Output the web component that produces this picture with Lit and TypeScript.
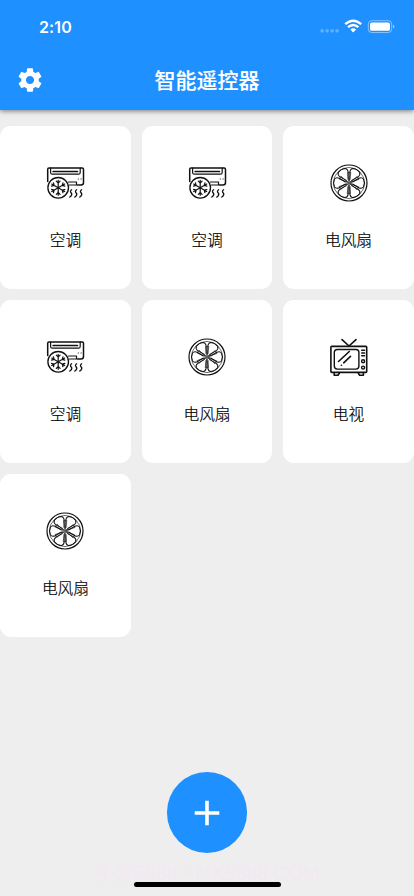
import { LitElement, html, svg, css } from "lit";
import { customElement } from "lit/decorators.js";

type Kind = "ac" | "fan" | "tv";

const names: Record<Kind, string> = { ac: "空调", fan: "电风扇", tv: "电视" };
const devices: Kind[] = ["ac", "ac", "fan", "ac", "fan", "tv", "fan"];

const arms = [0, 60, 120, 180, 240, 300];

const drawings = {
  ac: svg`
    <g fill="none" stroke="#111" stroke-width="1.5" stroke-linecap="round" stroke-linejoin="round">
      <path d="M2.7 18.5V6.2Q2.7 4.9 4 4.9H37.2Q38.5 4.9 38.5 6.2V19.5Q38.5 22 36 22H32.5"/>
      <path d="M5.6 5V9.4Q5.6 11.2 7.4 11.2H33.4Q35.2 11.2 35.2 9.4V5" stroke-width="1.2"/>
      <path d="M8.2 8.5H32.4" stroke-width="1.7"/>
      <path d="M23.5 19H31.5V22H24.5" stroke-width="1.2"/>
      <path d="M33.2 16h.2M36 16h.2" stroke-width="1"/>
      <circle cx="13.2" cy="24.8" r="10.3" fill="#fff" stroke-width="1.3"/>
      ${arms.map(a => svg`<path transform="rotate(${a} 13.2 24.8)" d="M13.2 24.8V17.3M11.3 18.2L13.2 20.1L15.1 18.2" stroke-width="1.2"/>`)}
      <path d="M26.6 26.8q-2 1.5-.5 3t-.3 3.5l-1 .8M31.6 26.8q-2 1.5-.5 3t-.3 3.5l-1 .8M36.6 26.8q-2 1.5-.5 3t-.3 3.5l-1 .8" stroke-width="1.3"/>
    </g>`,
  fan: svg`
    <g fill="none" stroke="#111" stroke-width="1.05" stroke-linejoin="round" stroke-linecap="round">
      <circle cx="20" cy="20" r="18" stroke-width="1.2"/>
      <circle cx="20" cy="20" r="15.6" stroke-width=".6"/>
      ${arms.map(a => svg`<path transform="rotate(${a + 30} 20 20)" d="M19 16.4L15.3 10.2Q13.9 7 16.2 5.4Q20 3.7 23.8 5.4Q26.1 7 24.7 10.2L21 16.4"/>`)}
      ${arms.map(a => svg`<path transform="rotate(${a} 20 20)" d="M20 17.5L18.5 9.6H21.5Z" stroke-width=".6"/>`)}
      <circle cx="20" cy="20" r="2.1" stroke-width=".9"/>
      <circle cx="20" cy="20" r=".9" fill="#111" stroke="none"/>
    </g>`,
  tv: svg`
    <g fill="none" stroke="#111" stroke-width="1.6" stroke-linecap="round" stroke-linejoin="round">
      <path d="M13 2.6L20 9L27 2.6"/>
      <rect x="1.9" y="9.4" width="35.8" height="26" rx=".8"/>
      <rect x="5.3" y="12.5" width="24.6" height="19.6" rx="3" stroke-width="1.4"/>
      <path d="M9.5 24.5L20.3 14.5M14.7 25.8L21.5 19.4M12.4 28.2h.1"/>
      <path d="M32.7 13.2H35.6M32.7 16H35.6M32.7 18.8H35.6" stroke-width="1.4"/>
      <circle cx="34.1" cy="24.2" r="1.5" stroke-width="1.4"/>
      <circle cx="34.1" cy="30.6" r="1.5" stroke-width="1.4"/>
      <path d="M5.2 36.2V38.2H9L10.3 36.2M29.3 36.2L30.6 38.2H34.4V36.2"/>
    </g>`,
};

@customElement("app-root")
export class AppRoot extends LitElement {
  static styles = css`
    :host {
      display: flex;
      flex-direction: column;
      position: relative;
      height: 896px;
      overflow: hidden;
      background: #eee;
      font-family: "Liberation Sans", "Noto Sans CJK SC", sans-serif;
    }
    svg { display: block; }
    header {
      flex: none;
      height: 109.5px;
      background: #1e90ff;
      color: #fff;
      box-shadow: 0 1px 5px rgba(0, 0, 0, .5);
    }
    .status {
      display: flex;
      align-items: center;
      justify-content: space-between;
      height: 53px;
      padding: 0 19px 0 39px;
    }
    .time { font: 600 16px/20px Inter, sans-serif; letter-spacing: .1px; }
    .bar {
      display: grid;
      grid-template-columns: 60px 1fr 60px;
      align-items: center;
      height: 54px;
    }
    .gear { justify-self: center; }
    h1 {
      margin: 0 0 3px;
      text-align: center;
      font-size: 21px;
      line-height: 30px;
      font-weight: 500;
      -webkit-text-stroke: .15px #fff;
      font-family: "Noto Sans CJK SC", sans-serif;
    }
    .grid {
      display: grid;
      grid-template-columns: repeat(3, 1fr);
      grid-auto-rows: 163.6px;
      gap: 10.6px;
      margin-top: 16px;
    }
    .card {
      display: flex;
      flex-direction: column;
      align-items: center;
      padding-top: 37px;
      box-sizing: border-box;
      background: #fff;
      border-radius: 11px;
    }
    .label {
      margin-top: 25.2px;
      font: 300 15.7px/23px "Noto Sans CJK SC", sans-serif;
      -webkit-text-stroke: .2px #000;
      color: #000;
    }
    .add {
      position: absolute;
      left: 166.7px;
      top: 772.3px;
      width: 80.5px;
      height: 80.5px;
      padding: 0;
      border: 0;
      border-radius: 50%;
      background: #1e90ff;
      display: grid;
      place-items: center;
    }
    .mark {
      position: absolute;
      left: 0;
      right: 0;
      top: 861px;
      text-align: center;
      white-space: nowrap;
      font-size: 19.6px;
      line-height: 24px;
      color: #f3e8f3;
    }
    .home {
      position: absolute;
      left: 133.5px;
      top: 881.8px;
      width: 147.5px;
      height: 5.2px;
      border-radius: 3px;
      background: #000;
    }
  `;

  render() {
    return html`
      <header>
        <div class="status">
          <span class="time">2:10</span>
          <svg width="76" height="20" viewBox="0 0 76 20" fill="#fff">
            <g opacity=".3">
              <rect x="1.5" y="12.3" width="3.2" height="3.2" rx="1"/><rect x="6.5" y="12.3" width="3.2" height="3.2" rx="1"/>
              <rect x="11.5" y="12.3" width="3.2" height="3.2" rx="1"/><rect x="16.5" y="12.3" width="3.2" height="3.2" rx="1"/>
            </g>
            <g fill="none" stroke="#fff" stroke-width="2.4">
              <path d="M26.2 7.2Q34.2 .3 42.2 7.2"/>
              <path d="M29 10.2Q34.2 5.8 39.4 10.2"/>
            </g>
            <path d="M31.3 12.5Q34.2 10.2 37.1 12.5L34.2 15.5Z"/>
            <rect x="49.3" y="3.7" width="23.4" height="11.8" rx="3.4" fill="none" stroke="#fff" stroke-opacity=".45"/>
            <rect x="51" y="5.4" width="20" height="8.4" rx="1.9"/>
            <path d="M74 7.8Q75.5 8.2 75.5 9.6T74 11.4Z" opacity=".5"/>
          </svg>
        </div>
        <div class="bar">
          <svg class="gear" width="28" height="28" viewBox="0 0 24 24" fill="#fff">
            <path d="M19.43 12.98c.04-.32.07-.64.07-.98s-.03-.66-.07-.98l2.11-1.65c.19-.15.24-.42.12-.64l-2-3.46c-.12-.22-.39-.3-.61-.22l-2.49 1c-.52-.4-1.08-.73-1.69-.98l-.38-2.65C14.46 2.18 14.25 2 14 2h-4c-.25 0-.46.18-.49.42l-.38 2.65c-.61.25-1.17.59-1.69.98l-2.49-1c-.23-.09-.49 0-.61.22l-2 3.46c-.13.22-.07.49.12.64l2.11 1.65c-.04.32-.07.65-.07.98s.03.66.07.98l-2.11 1.65c-.19.15-.24.42-.12.64l2 3.46c.12.22.39.3.61.22l2.49-1c.52.4 1.08.73 1.69.98l.38 2.65c.03.24.24.42.49.42h4c.25 0 .46-.18.49-.42l.38-2.65c.61-.25 1.17-.59 1.69-.98l2.49 1c.23.09.49 0 .61-.22l2-3.46c.12-.22.07-.49-.12-.64l-2.11-1.65zM12 15.5c-1.93 0-3.5-1.57-3.5-3.5s1.57-3.5 3.5-3.5 3.5 1.57 3.5 3.5-1.57 3.5-3.5 3.5z"/>
          </svg>
          <h1>智能遥控器</h1>
        </div>
      </header>
      <main class="grid">
        ${devices.map(kind => html`
          <div class="card">
            <svg width="40" height="40" viewBox="0 0 40 40">${drawings[kind]}</svg>
            <span class="label">${names[kind]}</span>
          </div>`)}
      </main>
      <button class="add" aria-label="添加">
        <svg width="26" height="26" viewBox="0 0 26 26"><path d="M13 .7V25.3M.7 13H25.3" stroke="#fff" stroke-width="3.6"/></svg>
      </button>
      <div class="mark">手游5588 • MX5588.COM</div>
      <div class="home"></div>
    `;
  }
}
